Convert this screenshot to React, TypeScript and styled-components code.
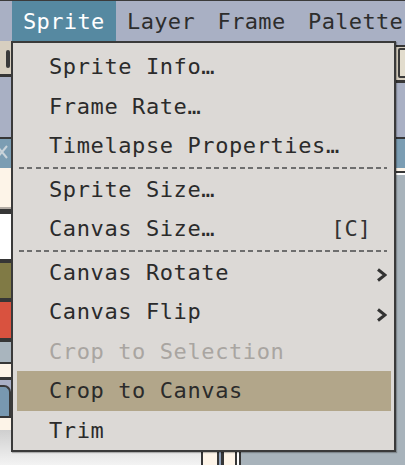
import React from "react";
import styled, { createGlobalStyle } from "styled-components";

const Global = createGlobalStyle`
  html, body { margin: 0; padding: 0; }
  body {
    width: 405px;
    height: 465px;
    overflow: hidden;
    font-family: "DejaVu Sans Mono", "Liberation Mono", monospace;
  }
  * { box-sizing: border-box; }
`;

const Screen = styled.div`
  position: relative;
  width: 405px;
  height: 465px;
  overflow: hidden;
  display: flex;
  flex-direction: column;
  background: #a8b3bb;
`;

const MenuBar = styled.nav`
  height: 41px;
  flex: none;
  border-top: 1px solid #3b3b3b;
  background: #a9b0c4;
  display: flex;
  align-items: stretch;
  padding-left: 12px;
`;

const BarItem = styled.div<{ $active?: boolean }>`
  display: flex;
  align-items: center;
  padding: 0 11.5px 0 11px;
  font-size: 22px;
  letter-spacing: 0.35px;
  white-space: nowrap;
  color: ${(p) => (p.$active ? "#ffffff" : "#2d2d2d")};
  background: ${(p) => (p.$active ? "#5689a1" : "transparent")};
`;

const Workspace = styled.div`
  flex: 1;
  display: grid;
  grid-template-columns: 201px 40px 1fr;
  min-height: 0;
`;

const Dock = styled.div`
  display: flex;
  flex-direction: column;
  min-width: 0;
`;

const Block = styled.div<{ $bg: string; $h: number }>`
  flex: none;
  height: ${(p) => p.$h}px;
  background: ${(p) => p.$bg};
  display: flex;
  align-items: flex-start;
  overflow: hidden;
`;

const EndBlock = styled(Block)`
  justify-content: flex-end;
`;

const Filler = styled.div`
  flex: 1;
  background: linear-gradient(#cfcfcf, #f3f3f3);
`;

const Handle = styled.div`
  width: 4px;
  height: 18px;
  margin: 9px 0 0 6px;
  border-radius: 2px;
  background: #3a3a3a;
`;

const CloseGlyph = styled.svg`
  display: block;
  margin-top: 6px;
`;

const TabShape = styled.div`
  width: 11px;
  height: 32px;
  margin-top: 5px;
  background: #7898b0;
  border: 2px solid #3a3a3a;
  border-left: none;
  border-bottom: none;
  border-top-right-radius: 7px;
`;

const BoxIcon = styled.div`
  width: 16px;
  height: 30px;
  margin: 1px -9px 0 0;
  border: 2px solid #3a3a3a;
  border-radius: 2px;
  background: #e2dccd;
`;

const StripeRow = styled.div`
  display: flex;
  align-items: stretch;
`;

const Stripe = styled.div<{ $bg: string; $w: number }>`
  flex: none;
  width: ${(p) => p.$w}px;
  background: ${(p) => p.$bg};
`;

const Dropdown = styled.div`
  position: absolute;
  left: 11px;
  top: 41px;
  width: 385px;
  height: 411px;
  border: 2px solid #3a3a3a;
  background: #dcd9d6;
  padding: 4px 3px 0 4px;
  display: flex;
  flex-direction: column;
  box-shadow: 1px 1px 1px rgba(0, 0, 0, 0.25);
`;

const Row = styled.div<{ $active?: boolean; $disabled?: boolean }>`
  flex: none;
  height: 39.5px;
  display: flex;
  align-items: center;
  padding-left: 32px;
  font-size: 22px;
  letter-spacing: 0.6px;
  white-space: pre;
  color: ${(p) => (p.$disabled ? "#a9a5a1" : "#2b2b2b")};
  background: ${(p) => (p.$active ? "#b2a68a" : "transparent")};
`;

const Label = styled.span`
  flex: 1;
`;

const Shortcut = styled.span`
  color: #333333;
  letter-spacing: 0;
  margin-right: 1px;
`;

const ArrowSlot = styled.span`
  flex: none;
  width: 19px;
  height: 100%;
  display: flex;
  align-items: center;
  padding: 6px 0 0 4px;
`;

const Separator = styled.div`
  flex: none;
  height: 4px;
  display: flex;
  align-items: center;
  padding: 0 4px 0 2px;
`;

const DashLine = styled.div`
  flex: 1;
  height: 2px;
  background: repeating-linear-gradient(
    90deg,
    #6e6e6e 0 5px,
    transparent 5px 8.5px
  );
`;

type Item =
  | { sep: true }
  | {
      sep?: false;
      label: string;
      shortcut?: string;
      sub?: boolean;
      disabled?: boolean;
      active?: boolean;
    };

const items: Item[] = [
  { label: "Sprite Info…" },
  { label: "Frame Rate…" },
  { label: "Timelapse Properties…" },
  { sep: true },
  { label: "Sprite Size…" },
  { label: "Canvas Size…", shortcut: "[C]" },
  { sep: true },
  { label: "Canvas Rotate", sub: true },
  { label: "Canvas Flip", sub: true },
  { label: "Crop to Selection", disabled: true },
  { label: "Crop to Canvas", active: true },
  { label: "Trim" },
];

const DARK = "#363636";
const CREAM = "#fdf4e8";
const BLUISH = "#a9b0c4";
const TEAL = "#7b9db3";

const leftBlocks: { bg: string; h: number; kind?: string }[] = [
  { bg: "#d7cfc0", h: 33, kind: "handle" },
  { bg: DARK, h: 3 },
  { bg: BLUISH, h: 60 },
  { bg: DARK, h: 2 },
  { bg: TEAL, h: 29, kind: "close" },
  { bg: CREAM, h: 39 },
  { bg: "#b3aca5", h: 2 },
  { bg: DARK, h: 5 },
  { bg: "#ffffff", h: 45 },
  { bg: DARK, h: 4 },
  { bg: "#807a45", h: 35 },
  { bg: DARK, h: 4 },
  { bg: "#d9523f", h: 36 },
  { bg: DARK, h: 4 },
  { bg: "#a9b5be", h: 20 },
  { bg: DARK, h: 2 },
  { bg: CREAM, h: 13 },
  { bg: DARK, h: 3 },
  { bg: "#a9b0c6", h: 36, kind: "tab" },
  { bg: DARK, h: 2 },
  { bg: CREAM, h: 12 },
];

const rightBlocks: { bg: string; h: number; kind?: string }[] = [
  { bg: BLUISH, h: 4 },
  { bg: DARK, h: 2 },
  { bg: "#d7cfc0", h: 33, kind: "box" },
  { bg: DARK, h: 3 },
  { bg: BLUISH, h: 54 },
  { bg: DARK, h: 2 },
  { bg: TEAL, h: 29 },
  { bg: CREAM, h: 3 },
  { bg: DARK, h: 2 },
  { bg: "#ffffff", h: 2 },
];

const stripes: { bg: string; w: number }[] = [
  { bg: DARK, w: 2 },
  { bg: CREAM, w: 14 },
  { bg: DARK, w: 2 },
  { bg: "#8fa0b8", w: 2 },
  { bg: DARK, w: 3 },
  { bg: CREAM, w: 11 },
  { bg: DARK, w: 2 },
  { bg: "#ffffff", w: 2 },
  { bg: DARK, w: 2 },
];

const SubArrow = () => (
  <svg width="11" height="14" viewBox="0 0 11 14">
    <path
      d="M2 1.5 L9 7 L2 12.5"
      fill="none"
      stroke="#333"
      strokeWidth="3"
      strokeLinejoin="miter"
    />
  </svg>
);

export default function App() {
  return (
    <Screen>
      <Global />
      <MenuBar>
        <BarItem $active>Sprite</BarItem>
        <BarItem>Layer</BarItem>
        <BarItem>Frame</BarItem>
        <BarItem>Palette</BarItem>
      </MenuBar>
      <Workspace>
        <Dock>
          {leftBlocks.map((b, i) => (
            <Block key={i} $bg={b.bg} $h={b.h}>
              {b.kind === "handle" && <Handle />}
              {b.kind === "close" && (
                <CloseGlyph width="9" height="14" viewBox="0 0 9 14">
                  <path
                    d="M-3 1 L7 13 M7 1 L-3 13"
                    stroke="#c9d3da"
                    strokeWidth="2"
                  />
                </CloseGlyph>
              )}
              {b.kind === "tab" && <TabShape />}
            </Block>
          ))}
          <Filler />
        </Dock>
        <StripeRow>
          {stripes.map((s, i) => (
            <Stripe key={i} $bg={s.bg} $w={s.w} />
          ))}
        </StripeRow>
        <Dock>
          {rightBlocks.map((b, i) => (
            <EndBlock key={i} $bg={b.bg} $h={b.h}>
              {b.kind === "box" && <BoxIcon />}
            </EndBlock>
          ))}
        </Dock>
      </Workspace>

      <Dropdown>
        {items.map((it, i) =>
          it.sep ? (
            <Separator key={i}>
              <DashLine />
            </Separator>
          ) : (
            <Row key={i} $active={it.active} $disabled={it.disabled}>
              <Label>{it.label}</Label>
              {it.shortcut && <Shortcut>{it.shortcut}</Shortcut>}
              <ArrowSlot>{it.sub && <SubArrow />}</ArrowSlot>
            </Row>
          )
        )}
      </Dropdown>
    </Screen>
  );
}
